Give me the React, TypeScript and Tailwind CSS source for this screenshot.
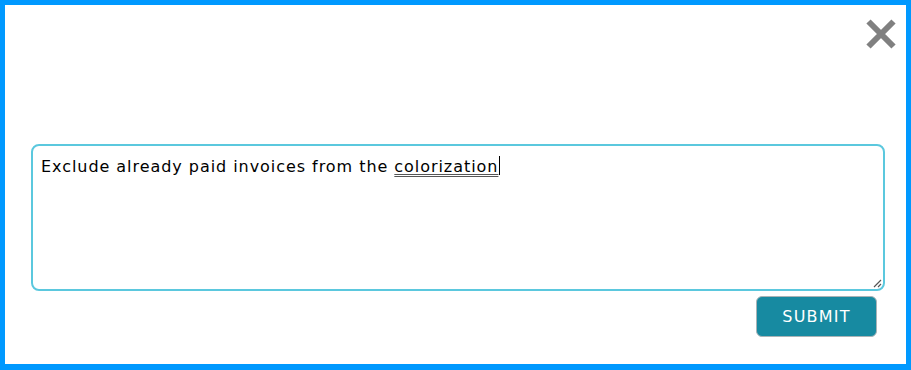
import React from 'react'

export default function App() {
  return (
    <div className="h-[370px] w-[911px] border-t-[5px] border-l-[5px] border-b-[6px] border-r-[5px] border-[#0099ff] bg-white font-['DejaVu_Sans',Verdana,sans-serif]">
      <div className="flex h-full flex-col">
        {/* close button */}
        <div className="flex justify-end pr-[10px] pt-[14px]">
          <button aria-label="Close" className="h-[30px] w-[30px] text-[#808080]">
            <svg viewBox="0 0 30 30" className="h-[30px] w-[30px]">
              <path d="M2.5 2.5 L27.5 27.5 M27.5 2.5 L2.5 27.5" stroke="currentColor" strokeWidth={6} strokeLinecap="butt" />
            </svg>
          </button>
        </div>

        {/* feedback box */}
        <div className="mt-[95px] flex flex-col pl-[26px] pr-[21px]">
          <div className="relative h-[147px] rounded-[8px] border-2 border-[#5bc8de] px-[8px] pt-[7px] text-[16px] leading-[20px] tracking-[0.95px] text-black">
            <span>Exclude already paid invoices from the </span>
            <span className="underline decoration-[#555] decoration-double decoration-1 underline-offset-[2px]">colorization</span>
            <span className="ml-[1px] inline-block h-[19px] w-px translate-y-[3px] bg-black" />
            <svg viewBox="0 0 10 10" className="absolute bottom-[1px] right-[1px] h-[10px] w-[10px]">
              <path d="M9 2 L2 9 M9 6 L6 9" stroke="#555" strokeWidth={1.2} />
            </svg>
          </div>
          <div className="mt-[5px] flex justify-end pr-[8px]">
            <button className="h-[41px] w-[121px] rounded-[6px] border border-[#a9b3b6] bg-[#178aa1] text-[16px] tracking-[1.2px] text-white">
              SUBMIT
            </button>
          </div>
        </div>
      </div>
    </div>
  )
}
